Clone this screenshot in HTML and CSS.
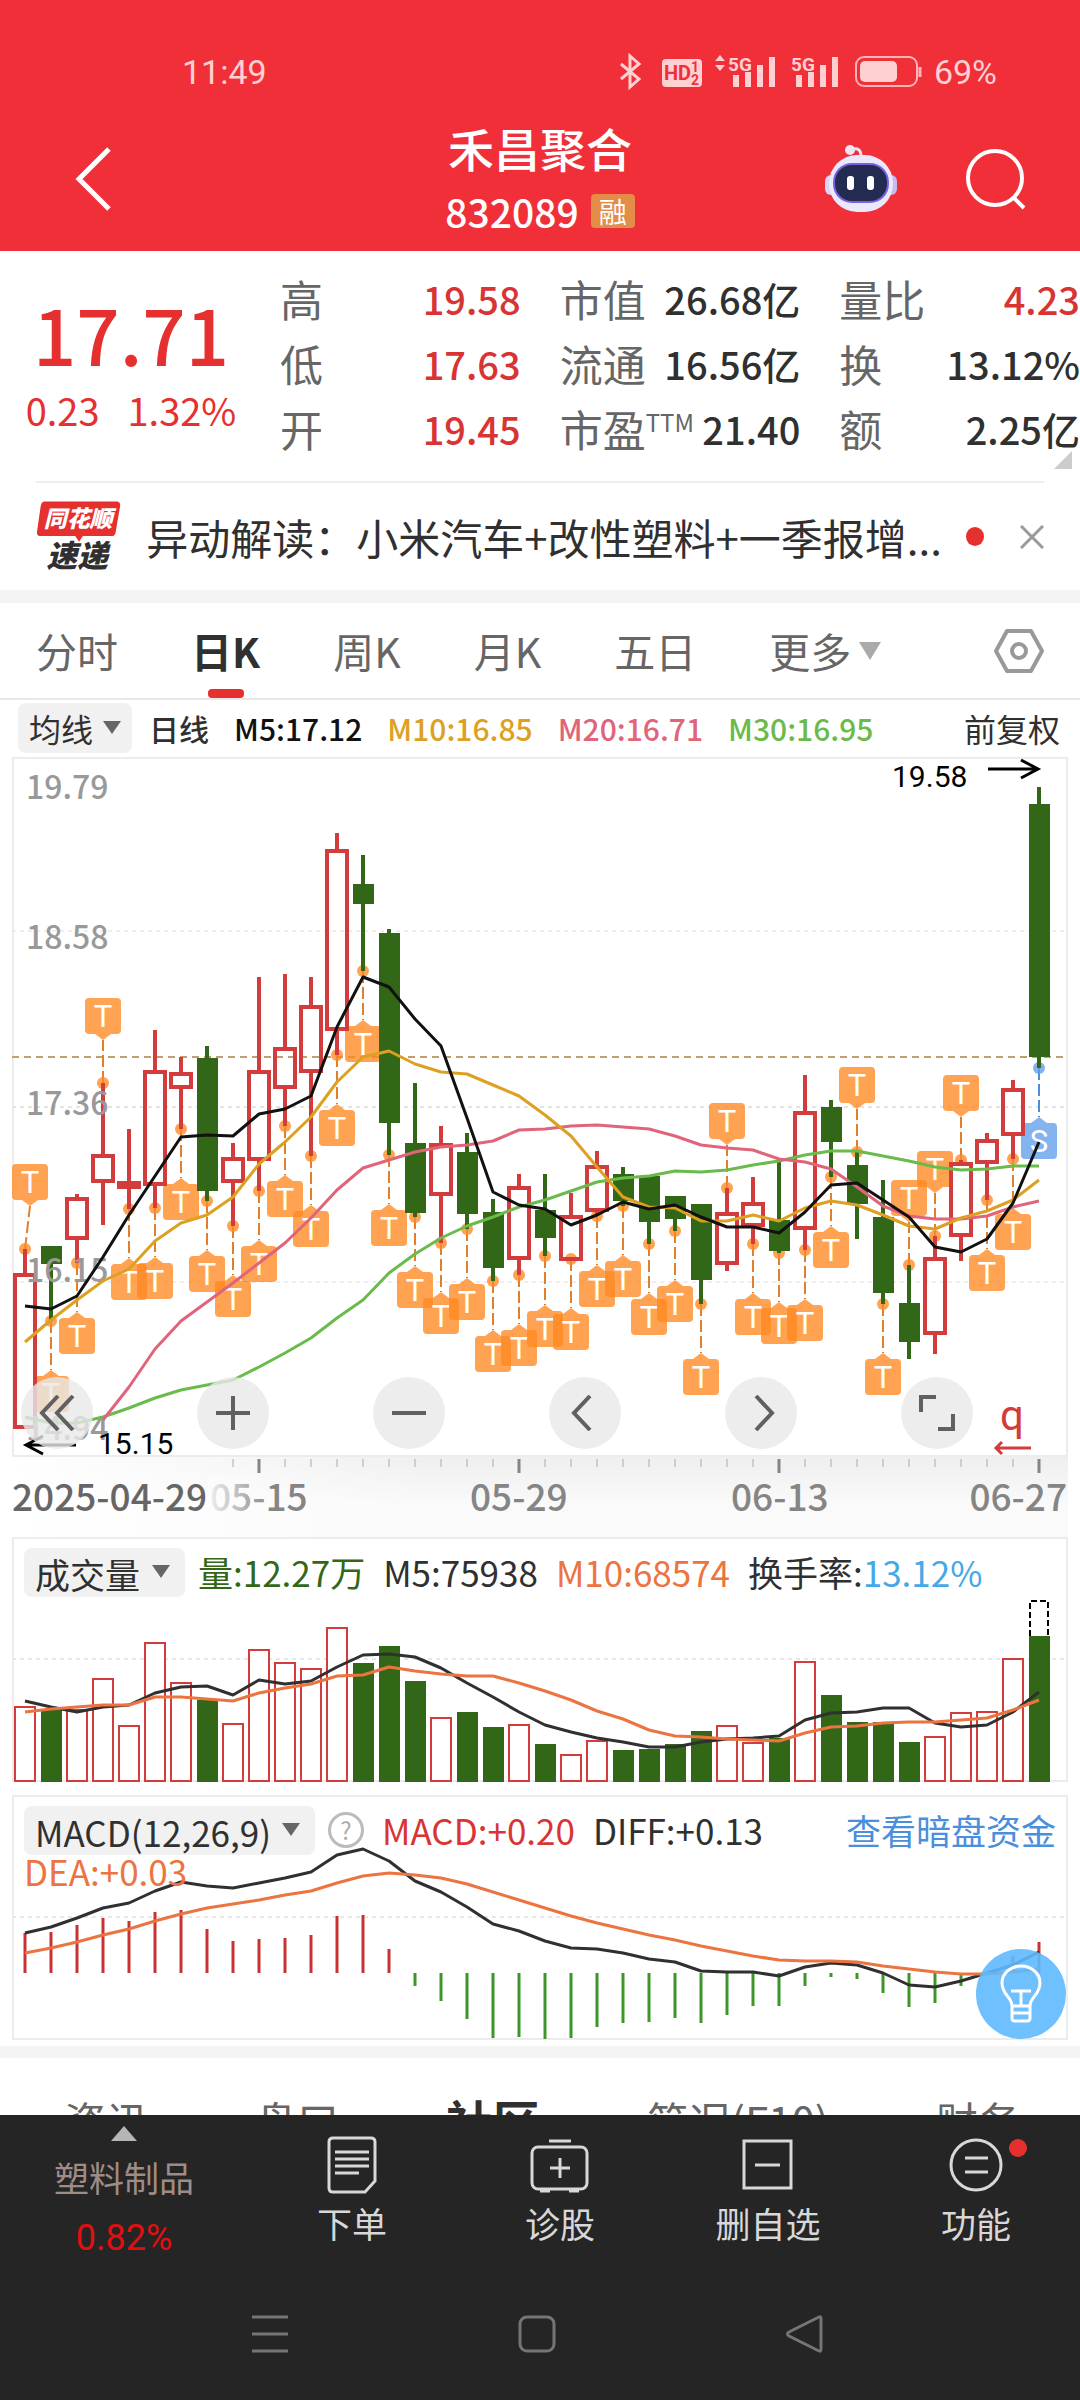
FILE: index.html
```html
<!DOCTYPE html>
<html lang="zh-CN">
<head>
    <meta charset="UTF-8">
    <meta name="viewport" content="width=device-width, initial-scale=1.0">
    <title>禾昌聚合 832089</title>
    <link rel="stylesheet" href="styles.css">
</head>
<body>
    <div class="page">
        <header class="header">
            <div class="status">
                <span>11:49</span>
                <div class="status-right">
                    <svg class="status-icons" width="310" height="40" viewBox="0 0 310 40">
                        <path d="M1 12L19 27L10 35V4L19 12L1 27" fill="none" stroke="#ffd0d2" stroke-width="3"/>
                        <rect x="42" y="7" width="40" height="28" rx="4" fill="#ffd0d2"/>
                        <text x="44" y="28" class="hd">HD</text>
                        <text x="71" y="20" class="hd-small">1</text>
                        <text x="71" y="33" class="hd-small">2</text>
                        <path d="M95 9l5-6l5 6zM95 13l5 6l5-6z" fill="#ffd0d2"/>
                        <text x="108" y="19" class="net">5G</text>
                        <path d="M116 23v12M128 20v15M140 13v22M152 5v30" stroke="#ffd0d2" stroke-width="6"/>
                        <text x="171" y="19" class="net">5G</text>
                        <path d="M179 23v12M191 20v15M203 13v22M215 5v30" stroke="#ffd0d2" stroke-width="6"/>
                        <rect x="236" y="5" width="61" height="29" rx="8" fill="none" stroke="#ffb5b8" stroke-width="2"/>
                        <rect x="240" y="9" width="37" height="21" rx="5" fill="#ffd0d2"/>
                        <path d="M300 15v10" stroke="#ffb5b8" stroke-width="3"/>
                    </svg>
                    <span>69%</span>
                </div>
            </div>
            <div class="titlebar">
                <button class="icon-btn back" aria-label="返回">
                    <svg width="40" height="66" viewBox="0 0 40 66"><path d="M35 3L5 33L35 63" fill="none" stroke="#fff" stroke-width="5"/></svg>
                </button>
                <div class="stock">
                    <h1>禾昌聚合</h1>
                    <p>832089 <span class="tag">融</span></p>
                </div>
                <div class="actions">
                    <button class="icon-btn" aria-label="助手">
                        <svg width="74" height="70" viewBox="0 0 74 70">
                            <path d="M37 12C37 6 34 4 29 5" fill="none" stroke="#e6e2f6" stroke-width="3"/>
                            <circle cx="26" cy="6" r="5" fill="#f4e4f2"/>
                            <rect x="1" y="31" width="14" height="20" rx="6" fill="#d9d5f5"/>
                            <rect x="59" y="31" width="14" height="20" rx="6" fill="#c3bdf0"/>
                            <rect x="5" y="11" width="64" height="57" rx="28" fill="#eae8fb"/>
                            <rect x="9" y="19" width="56" height="40" rx="19" fill="#7b5fe0"/>
                            <rect x="11" y="21" width="52" height="36" rx="17" fill="#222c50"/>
                            <rect x="23" y="32" width="7" height="14" rx="3" fill="#fff"/>
                            <rect x="43" y="32" width="7" height="14" rx="3" fill="#fff"/>
                        </svg>
                    </button>
                    <button class="icon-btn" aria-label="搜索">
                        <svg width="64" height="64" viewBox="0 0 64 64"><circle cx="31" cy="31" r="27" fill="none" stroke="#fff" stroke-width="4"/><path d="M49 50L60 61" stroke="#fff" stroke-width="4"/></svg>
                    </button>
                </div>
            </div>
        </header>

        <main class="content">
            <section class="quote">
                <div class="price">
                    <strong>17.71</strong>
                    <p><span>0.23</span><span>1.32%</span></p>
                </div>
                <dl class="stats">
                    <div><dt>高</dt><dd class="up">19.58</dd></div>
                    <div><dt>市值</dt><dd>26.68亿</dd></div>
                    <div><dt>量比</dt><dd class="up">4.23</dd></div>
                    <div><dt>低</dt><dd class="up">17.63</dd></div>
                    <div><dt>流通</dt><dd>16.56亿</dd></div>
                    <div><dt>换</dt><dd>13.12%</dd></div>
                    <div><dt>开</dt><dd class="up">19.45</dd></div>
                    <div><dt>市盈<sup>TTM</sup></dt><dd>21.40</dd></div>
                    <div><dt>额</dt><dd>2.25亿</dd></div>
                </dl>
                <i class="corner"></i>
            </section>

            <section class="news">
                <svg class="news-logo" width="90" height="80" viewBox="0 0 90 80">
                    <path d="M9 3H84Q88 3 88 7L83 36Q82 39 79 39H49L45 45L41 39H4Q1 39 1 35L5 7Q6 3 9 3Z" fill="#e6302f"/>
                    <text x="8" y="30" class="logo-top">同花顺</text>
                    <text x="11" y="71" class="logo-bottom">速递</text>
                </svg>
                <a href="#">异动解读：小米汽车+改性塑料+一季报增...</a>
                <span class="dot"></span>
                <button class="icon-btn" aria-label="关闭">
                    <svg width="24" height="24" viewBox="0 0 24 24"><path d="M1 1L23 23M23 1L1 23" stroke="#999" stroke-width="3"/></svg>
                </button>
            </section>

            <nav class="tabs">
                <button>分时</button>
                <button class="active">日K</button>
                <button>周K</button>
                <button>月K</button>
                <button>五日</button>
                <button class="more">更多<i class="caret"></i></button>
                <button class="setting" aria-label="设置">
                    <svg width="50" height="46" viewBox="0 0 50 46"><path d="M13 3H37L48 23L37 43H13L2 23Z" fill="none" stroke="#999" stroke-width="4" stroke-linejoin="round"/><circle cx="25" cy="23" r="7" fill="none" stroke="#999" stroke-width="4"/></svg>
                </button>
            </nav>

            <div class="ma-row">
                <select class="picker" aria-label="均线"><option>均线</option></select>
                <span>日线</span>
                <span class="m5">M5:17.12</span>
                <span class="m10">M10:16.85</span>
                <span class="m20">M20:16.71</span>
                <span class="m30">M30:16.95</span>
                <span class="adjust">前复权</span>
            </div>

            <div class="panel">
                <svg id="kline" viewBox="0 0 1056 700"></svg>
                <div class="tools">
                    <button aria-label="最早"><svg width="36" height="36" viewBox="0 0 36 36"><path d="M19 1L3 18L19 35M34 1L18 18L34 35"/></svg></button>
                    <button aria-label="放大"><svg width="36" height="36" viewBox="0 0 36 36"><path d="M18 1V35M1 18H35"/></svg></button>
                    <button aria-label="缩小"><svg width="36" height="36" viewBox="0 0 36 36"><path d="M1 18H35"/></svg></button>
                    <button aria-label="左移"><svg width="36" height="36" viewBox="0 0 36 36"><path d="M23 1L7 18L23 35"/></svg></button>
                    <button aria-label="右移"><svg width="36" height="36" viewBox="0 0 36 36"><path d="M13 1L29 18L13 35"/></svg></button>
                    <button aria-label="全屏"><svg width="36" height="36" viewBox="0 0 36 36"><path d="M2 17V2H17M34 19V34H19"/></svg></button>
                </div>
            </div>
            <svg id="axis" class="axis" viewBox="0 0 1056 80"></svg>

            <div class="panel">
                <svg id="volume" viewBox="0 0 1056 245"></svg>
                <div class="legend">
                    <select class="picker" aria-label="成交量"><option>成交量</option></select>
                    <span class="vol">量:12.27万</span>
                    <span>M5:75938</span>
                    <span class="orange">M10:68574</span>
                    <span>换手率:<b>13.12%</b></span>
                </div>
            </div>

            <div class="panel macd">
                <svg id="macd" viewBox="0 0 1056 245"></svg>
                <div class="legend">
                    <select class="picker" aria-label="指标"><option>MACD(12,26,9)</option></select>
                    <button class="help" aria-label="说明">?</button>
                    <span class="up">MACD:+0.20</span>
                    <span>DIFF:+0.13</span>
                    <a href="#">查看暗盘资金</a>
                    <span class="orange dea">DEA:+0.03</span>
                </div>
                <button class="bulb" aria-label="提示">
                    <svg width="44" height="60" viewBox="0 0 44 60">
                        <path d="M13 42C13 33 3 31 3 19A19 17 0 0 1 41 19C41 31 31 33 31 42V54Q31 57 28 57H16Q13 57 13 54Z M13 42H31M13 49H31M12 27H32M22 27V42" fill="none" stroke="#fff" stroke-width="3"/>
                    </svg>
                </button>
            </div>

            <nav class="sections">
                <a href="#">资讯</a>
                <a href="#">盘口</a>
                <a href="#" class="active">社区</a>
                <a href="#">简况(F10)</a>
                <a href="#">财务</a>
            </nav>
        </main>

        <footer class="footer">
            <div class="menu">
                <button class="industry">
                    <i></i>
                    <span>塑料制品</span>
                    <em>0.82%</em>
                </button>
                <button>
                    <svg width="60" height="58" viewBox="0 0 60 58"><path d="M11 2H49Q53 2 53 6V45L43 56H11Q7 56 7 52V6Q7 2 11 2ZM13 16H47M13 23H47M13 30H47M13 37H37"/></svg>
                    下单
                </button>
                <button>
                    <svg width="60" height="58" viewBox="0 0 60 58"><rect x="2" y="11" width="55" height="42" rx="6"/><path d="M19 5H41M30 22V42M20 32H40M10 55H20M39 55H49"/></svg>
                    诊股
                </button>
                <button>
                    <svg width="60" height="58" viewBox="0 0 60 58"><rect x="6" y="5" width="47" height="47"/><path d="M17 29H42"/></svg>
                    删自选
                </button>
                <button class="func">
                    <svg width="60" height="58" viewBox="0 0 60 58"><circle cx="30" cy="29" r="25"/><path d="M19 22H42M19 36H42"/></svg>
                    功能
                </button>
            </div>
            <div class="sysnav">
                <button aria-label="最近任务"><svg width="40" height="40" viewBox="0 0 40 40"><path d="M2 3H38M2 20H38M2 37H38"/></svg></button>
                <button aria-label="主页"><svg width="40" height="40" viewBox="0 0 40 40"><rect x="3" y="3" width="34" height="34" rx="7"/></svg></button>
                <button aria-label="后退"><svg width="40" height="40" viewBox="0 0 40 40"><path d="M35 3Q37 2 37 5V35Q37 38 35 37L5 22Q2 20 5 18Z"/></svg></button>
            </div>
        </footer>
    </div>
    <script src="script.js"></script>
</body>
</html>
```

FILE: styles.css
```css
* {
    box-sizing: border-box;
}
body {
    margin: 0;
    background: #fff;
    color: #303030;
    font-family: "Noto Sans CJK SC", "Noto Sans", sans-serif;
}
button, select {
    font-family: inherit;
    color: inherit;
    border: 0;
    padding: 0;
    background: none;
}
a {
    color: inherit;
    text-decoration: none;
}
h1, p, dl, dd {
    margin: 0;
}
svg {
    display: block;
}
.page {
    display: flex;
    flex-direction: column;
    height: 100vh;
}

/* header */
.header {
    background: #f12f38;
    color: #fff;
}
.status {
    display: flex;
    justify-content: space-between;
    padding: 50px 83px 0 182px;
    height: 94px;
    line-height: 44px;
    font-size: 34px;
    font-family: Roboto, sans-serif;
    color: #ffd0d2;
}
.status-right {
    display: flex;
    align-items: center;
    gap: 4px;
}
.hd {
    font: 700 20px Roboto, sans-serif;
    fill: #f12f38;
}
.hd-small {
    font: 700 14px Roboto, sans-serif;
    fill: #f12f38;
}
.net {
    font: 700 19px Roboto, sans-serif;
    fill: #ffd0d2;
}
.titlebar {
    display: grid;
    grid-template-columns: 1fr auto 1fr;
    align-items: center;
    height: 157px;
    padding: 18px 52px 6px;
}
.back {
    padding-left: 22px;
    justify-self: start;
}
.stock {
    text-align: center;
    line-height: 64px;
}
.stock h1 {
    font-size: 46px;
    font-weight: 500;
}
.stock p {
    display: flex;
    align-items: center;
    justify-content: center;
    gap: 12px;
    font-size: 39px;
    font-weight: 500;
}
.tag {
    background: #e38d49;
    font-size: 28px;
    font-weight: 400;
    line-height: 34px;
    padding: 0 8px;
    border-radius: 4px;
}
.actions {
    display: flex;
    align-items: center;
    justify-content: flex-end;
    gap: 66px;
}

/* quote */
.quote {
    display: grid;
    grid-template-columns: 262px 1fr;
    gap: 18px;
    padding: 15px 0 22px;
    position: relative;
}
.quote::after {
    content: "";
    position: absolute;
    left: 36px;
    right: 36px;
    bottom: 0;
    border-bottom: 2px solid #eee;
}
.price {
    text-align: center;
    color: #e6302f;
    padding-top: 20px;
}
.price strong {
    display: block;
    font-size: 76px;
    font-weight: 500;
    line-height: 94px;
}
.price p {
    display: flex;
    justify-content: center;
    gap: 28px;
    font-size: 38px;
    line-height: 60px;
}
.up {
    color: #d93434;
}
.stats {
    display: grid;
    grid-template-columns: repeat(3, 1fr);
    column-gap: 39px;
}
.stats div {
    display: flex;
    justify-content: space-between;
    line-height: 65px;
    white-space: nowrap;
}
.stats dt {
    font-size: 43px;
    color: #666;
}
.stats dd {
    font-size: 38px;
    font-weight: 500;
}
.stats sup {
    font-size: 24px;
    line-height: 24px;
}
.corner {
    position: absolute;
    right: 8px;
    bottom: 14px;
    border-left: 18px solid transparent;
    border-bottom: 18px solid #ccc;
}

/* news */
.news {
    display: flex;
    align-items: center;
    height: 108px;
    padding: 0 36px;
    gap: 24px;
    border-bottom: 1px solid #f4f4f4;
}
.news a {
    flex: 1;
    font-size: 42px;
    white-space: nowrap;
}
.news .dot {
    width: 19px;
    height: 19px;
    border-radius: 50%;
    background: #e6302f;
    margin-right: 12px;
}
.logo-top {
    font-size: 24px;
    font-weight: 900;
    font-style: italic;
    fill: #fff;
}
.logo-bottom {
    font-size: 32px;
    font-weight: 900;
    font-style: italic;
    fill: #303030;
}

/* period tabs */
.tabs {
    display: flex;
    align-items: center;
    height: 109px;
    padding: 0 36px;
    border-top: 12px solid #f4f4f4;
    border-bottom: 2px solid #e8e8e8;
    color: #666;
}
.tabs button {
    position: relative;
    font-size: 41px;
    line-height: 95px;
    margin-right: 73px;
}
.tabs .active {
    color: #303030;
    font-weight: 700;
}
.tabs .active::after {
    content: "";
    position: absolute;
    left: 50%;
    bottom: 0;
    margin-left: -18px;
    width: 36px;
    height: 9px;
    border-radius: 4px;
    background: #e6302f;
}
.tabs .more {
    display: flex;
    align-items: center;
    gap: 8px;
    margin: 0;
}
.caret {
    border: 11px solid transparent;
    border-top: 18px solid #aaa;
    border-bottom: 0;
}
.tabs .setting {
    margin: 0 0 0 auto;
}

/* averages row */
.ma-row {
    display: flex;
    align-items: center;
    height: 57px;
    padding: 0 20px 2px 18px;
    gap: 25px;
    font-size: 30px;
    font-weight: 500;
    white-space: nowrap;
}
.picker {
    appearance: none;
    height: 50px;
    padding: 0 38px 0 11px;
    border-radius: 8px;
    font-size: 32px;
    background: #f1f1f1 url("data:image/svg+xml,%3Csvg xmlns='http://www.w3.org/2000/svg' width='18' height='14'%3E%3Cpath d='M0 0H18L9 13Z' fill='%23666'/%3E%3C/svg%3E") no-repeat right 11px center;
}
.ma-row .picker {
    margin-right: -8px;
}
.m5 {
    color: #111;
}
.m10 {
    color: #dda022;
}
.m20 {
    color: #e0647a;
}
.m30 {
    color: #6aba4c;
}
.adjust {
    margin-left: auto;
    font-size: 32px;
    font-weight: 400;
}

/* chart panels, drawing and overlay share one grid cell */
.panel {
    display: grid;
    position: relative;
    margin: 0 12px;
    box-shadow: inset 0 0 0 2px #ececec;
}
.panel > svg, .legend, .tools {
    grid-area: 1 / 1;
    width: 100%;
}
.panel text {
    font-family: Roboto, "Noto Sans CJK SC", sans-serif;
}
.tools {
    align-self: end;
    display: flex;
    justify-content: space-between;
    padding: 0 95px 8px 9px;
}
.tools button {
    display: grid;
    place-items: center;
    width: 72px;
    height: 72px;
    border-radius: 50%;
    background: rgba(232, 232, 232, .8);
}
.tools path {
    fill: none;
    stroke: #606060;
    stroke-width: 4;
}
.axis {
    width: calc(100% - 24px);
    margin: 0 12px;
    background: linear-gradient(90deg, #fff, #ffffff00 40%), linear-gradient(#efefef, #fafafa 60%);
}
.axis text, .panel .scale {
    font-family: "Noto Sans CJK SC", sans-serif;
    font-size: 37px;
    font-weight: 500;
    fill: #858585;
}
.axis .first {
    fill: #666;
}
.panel .scale {
    font-size: 32px;
    fill: #999;
}
.panel .limit {
    font-size: 30px;
    fill: #000;
}
.panel .mark {
    font-size: 31px;
    fill: #fff;
    text-anchor: middle;
}
.legend {
    display: flex;
    flex-wrap: wrap;
    align-content: flex-start;
    align-items: center;
    padding: 10px 12px 0;
    column-gap: 18px;
    font-size: 35px;
    line-height: 50px;
    white-space: nowrap;
}
.legend .picker {
    font-size: 35px;
    height: 49px;
    padding-right: 44px;
    background-position: right 15px center;
    margin-right: -5px;
}
.legend b {
    font-weight: 400;
    color: #46a8e6;
}
.vol {
    color: #316716;
}
.orange {
    color: #eb7440;
}
.macd {
    margin-top: 13px;
}
.macd .legend a {
    margin-left: auto;
    color: #4a8fdc;
}
.dea {
    width: 100%;
    line-height: 32px;
}
.help {
    width: 36px;
    height: 36px;
    border: 3px solid #bbb;
    border-radius: 50%;
    color: #aaa;
    font-size: 24px;
    line-height: 28px;
}
.bulb {
    position: absolute;
    right: 2px;
    bottom: 1px;
    display: grid;
    place-items: center;
    width: 90px;
    height: 90px;
    border-radius: 50%;
    background: rgba(94, 186, 254, .9);
}

/* lower tabs, partly behind the menu */
.content {
    flex: 1;
    min-height: 0;
    overflow: hidden;
}
.sections {
    display: flex;
    align-items: center;
    justify-content: space-between;
    margin-top: 6px;
    height: 134px;
    padding: 0 60px 0 64px;
    border-top: 12px solid #f4f4f4;
    font-size: 42px;
    color: #666;
}
.sections .active {
    font-size: 47px;
    font-weight: 700;
    color: #303030;
}

/* bottom */
.footer {
    background: #252525;
    color: #d8d8d8;
    height: 285px;
}
.menu {
    display: grid;
    grid-template-columns: 248fr 208fr 208fr 208fr 208fr;
    height: 160px;
}
.menu button {
    position: relative;
    display: flex;
    flex-direction: column;
    align-items: center;
    padding-top: 21px;
    font-size: 35px;
    line-height: 58px;
}
.menu svg, .sysnav svg {
    fill: none;
    stroke: #d8d8d8;
    stroke-width: 3;
}
.menu .industry {
    padding-top: 11px;
    line-height: 60px;
    color: #a08c86;
}
.industry i {
    border: 13px solid transparent;
    border-bottom: 15px solid #b5b5b5;
    border-top: 0;
    margin-bottom: 6px;
}
.industry em {
    font: 36px/62px Roboto, sans-serif;
    color: #e01010;
}
.func::after {
    content: "";
    position: absolute;
    top: 24px;
    left: 50%;
    margin-left: 33px;
    width: 18px;
    height: 18px;
    border-radius: 50%;
    background: #e6302f;
}
.sysnav {
    display: flex;
    justify-content: space-between;
    padding: 39px 256px 0 250px;
}
.sysnav svg {
    stroke: #757575;
}
```

FILE: script.js
```js
var RED = '#d23c3c', GREEN = '#316716'
var STEP = 26, FIRST = 13

// type, high, body top, body bottom, low, marker side
var candles = [
    ['r',492,518,670,670,'up'], ['g',489,489,507,564], ['r',437,442,481,506], ['r',326,399,424,468,'up'],
    ['r',372,426,430,452], ['r',273,315,427,451], ['r',300,317,330,372], ['g',289,301,434,444],
    ['r',386,402,424,469], ['r',220,315,402,434], ['r',217,292,330,369], ['r',220,250,314,399],
    ['r',76,94,272,298], ['g',98,127,147,214], ['g',172,176,366,398], ['g',326,386,456,460],
    ['r',369,388,437,486], ['g',376,395,457,472], ['g',442,455,511,524], ['r',417,431,501,518],
    ['g',417,453,481,499], ['r',436,460,502,502], ['r',394,410,453,459], ['g',410,417,444,449],
    ['g',419,419,465,487], ['g',439,439,462,474], ['g',447,447,523,547], ['r',431,457,506,514,'up'],
    ['r',420,447,468,487], ['g',404,463,494,496], ['r',318,356,471,493], ['g',343,350,385,420],
    ['g',395,408,447,482,'up'], ['g',423,460,536,547], ['g',508,546,585,602,'up'], ['r',479,502,576,597,'up'],
    ['r',403,407,478,504,'up'], ['r',376,384,405,443], ['r',323,333,377,402], ['g',30,47,300,311]
]
var ma5 = [549,552,539,500,458,419,380,378,379,357,352,339,270,220,230,262,289,361,435,448,452,468,458,445,452,448,460,470,470,476,455,428,426,443,460,490,495,482,446,385]
var ma10 = [585,563,543,524,512,484,466,458,440,407,385,360,325,300,294,307,315,317,328,339,358,379,410,440,450,451,464,464,458,464,451,444,448,458,469,472,461,454,443,423]
var ma20 = [663,630,592,564,545,526,506,486,461,433,411,403,395,390,388,384,373,372,369,368,370,372,379,388,391,393,402,405,412,430,449,459,462,462,459,450,444]
var ma30 = [660,666,666,660,651,641,633,628,623,610,596,581,561,543,516,497,481,469,460,450,443,434,425,421,419,414,415,413,408,404,398,394,394,399,404,410,413,412,409,409]

var volumes = [170,173,173,142,189,106,146,163,187,113,126,132,91,126,109,144,181,175,190,188,207,218,204,213,212,207,194,189,206,201,125,158,185,185,205,200,176,175,122,99]
var vol5 = [164,170,175,170,168,156,150,149,158,143,147,144,130,118,117,120,131,146,160,175,188,195,201,205,210,210,205,202,201,199,183,176,175,171,171,186,190,188,175,155]
var vol10 = [175,172,170,168,168,160,160,162,164,156,151,147,139,138,130,134,137,139,139,146,154,163,174,182,193,199,200,202,203,204,196,190,189,186,185,185,183,181,173,163]

var macdBars = [138,137,130,123,126,117,115,134,146,144,143,140,121,120,154,191,206,224,243,242,244,243,232,228,227,223,228,220,211,211,191,182,184,198,212,208,191,177,161,147]
var diff = [138,132,123,113,108,96,87,91,93,88,83,77,60,54,66,86,97,112,129,136,146,153,154,158,164,167,176,177,177,181,172,168,170,178,190,192,186,178,170,157]
var dea = [158,153,147,140,134,126,119,113,109,105,100,96,88,81,78,80,83,89,97,105,113,121,128,134,140,145,151,156,161,165,166,166,167,171,174,177,179,179,177,174]

function cx(i) {
    return FIRST + STEP * i
}
function hline(y, color, dash, w) {
    return `<path d="M0 ${y}H1056" stroke="${color}" stroke-width="${w}" stroke-dasharray="${dash}"/>`
}
function vline(x, y1, y2, color, w) {
    return `<path d="M${x} ${y1}V${y2}" stroke="${color}" stroke-width="${w}"/>`
}
function curve(data, color, start = 0) {
    var pts = data.map((y, i) => cx(i + start) + ',' + y).join(' ')
    return `<polyline points="${pts}" fill="none" stroke="${color}" stroke-width="3" stroke-linejoin="round"/>`
}
function marker(c, i) {
    var up = c[5] == 'up'
    var last = i == candles.length - 1
    var dot = up ? c[1] : c[4]
    var top = up ? dot - 85 : dot + 55
    var x = Math.max(cx(i), 18)
    var fill = last ? '#5f9eeb' : '#ff8820'
    var tip = up ? top + 42 : top - 6
    var edge = up ? top + 36 : top
    return `<path d="M${cx(i)} ${dot}L${x} ${tip}" stroke="${last ? '#4a8fdc' : '#e0802c'}" stroke-width="2" stroke-dasharray="12 4"/>
        <circle cx="${cx(i)}" cy="${dot}" r="6" fill="${fill}" opacity=".78"/>
        <g opacity=".77" fill="${fill}"><rect x="${x - 18}" y="${top}" width="36" height="36" rx="4"/><path d="M${x - 8} ${edge}L${x} ${tip}L${x + 8} ${edge}Z"/></g>
        <text class="mark" x="${x}" y="${top + 29}">${last ? 'S' : 'T'}</text>`
}
function candle(c, i) {
    var x = cx(i)
    if (c[0] == 'g')
        return vline(x, c[1], c[4], GREEN, 4) + `<rect x="${x - 10}" y="${c[2]}" width="21" height="${c[3] - c[2]}" fill="${GREEN}"/>`
    return vline(x, c[1], c[2], RED, 4) + vline(x, c[3], c[4], RED, 4) +
        `<rect x="${x - 10}" y="${c[2]}" width="20" height="${c[3] - c[2]}" fill="none" stroke="${RED}" stroke-width="4"/>`
}

function drawKline() {
    var s = hline(174, '#ddd', '4 4', 1) + hline(350, '#e4e4e4', '4 4', 2) + hline(525, '#ddd', '4 4', 1)
    s += hline(300, '#c0a070', '7 5', 2)
    s += candles.map(marker).join('') + candles.map(candle).join('')
    var labels = [['19.79', 42], ['18.58', 192], ['17.36', 358], ['16.15', 525], ['14.94', 683]]
    labels.forEach(l => s += `<text class="scale" x="14" y="${l[1]}">${l[0]}</text>`)
    s += curve(ma30, '#6aba4c') + curve(ma20, '#e0647a', 3) + curve(ma10, '#dda022') + curve(ma5, '#111')
    s += '<text class="limit" x="880" y="30">19.58</text><path d="M976 12H1026M1009 3L1026 12L1009 21" fill="none" stroke="#000" stroke-width="3"/>'
    s += '<text class="limit" x="86" y="697">15.15</text><path d="M64 688H14M31 679L14 688L31 697" fill="none" stroke="#000" stroke-width="3"/>'
    s += `<text x="988" y="673" font-size="42" fill="${RED}">q</text><path d="M1019 691H984M990 685L984 691L990 697" fill="none" stroke="${RED}" stroke-width="3"/>`
    document.getElementById('kline').innerHTML = s
}
function drawAxis() {
    var s = ''
    for (var i = 8; i < 40; i++)
        s += i % 10 == 9 ? vline(cx(i), 2, 16, '#858585', 3) : vline(cx(i), 2, 10, '#aaa', 1)
    s += '<text x="198" y="54">05-15</text><text x="458" y="54">05-29</text><text x="719" y="54">06-13</text><text x="1055" y="54" text-anchor="end">06-27</text>'
    s += '<defs><linearGradient id="fade"><stop stop-color="#fcfcfc" stop-opacity=".9"/><stop offset="1" stop-color="#fcfcfc" stop-opacity="0"/></linearGradient></defs>'
    s += '<rect x="196" y="20" width="64" height="40" fill="url(#fade)"/><text class="first" x="0" y="54">2025-04-29</text>'
    document.getElementById('axis').innerHTML = s
}
function drawVolume() {
    var s = hline(122, '#e8e8e8', '4 4', 2)
    volumes.forEach((y, i) => {
        if (candles[i][0] == 'g') s += `<rect x="${cx(i) - 10}" y="${y}" width="21" height="${245 - y}" fill="${GREEN}"/>`
        else s += `<rect x="${cx(i) - 10}" y="${y}" width="20" height="${244 - y}" fill="#fff" stroke="${RED}" stroke-width="2"/>`
    })
    s += '<path d="M1018 99V64H1036V99" fill="none" stroke="#000" stroke-width="2" stroke-dasharray="6 3"/>'
    s += curve(vol5, '#303030') + curve(vol10, '#eb7440')
    document.getElementById('volume').innerHTML = s
}
function drawMacd() {
    var s = hline(122, '#e8e8e8', '4 4', 2)
    macdBars.forEach((y, i) => s += vline(cx(i), 178, y, y < 178 ? '#c83232' : '#3c9628', 3))
    s += curve(diff, '#303030') + curve(dea, '#eb7440')
    document.getElementById('macd').innerHTML = s
}

drawKline()
drawAxis()
drawVolume()
drawMacd()
```
